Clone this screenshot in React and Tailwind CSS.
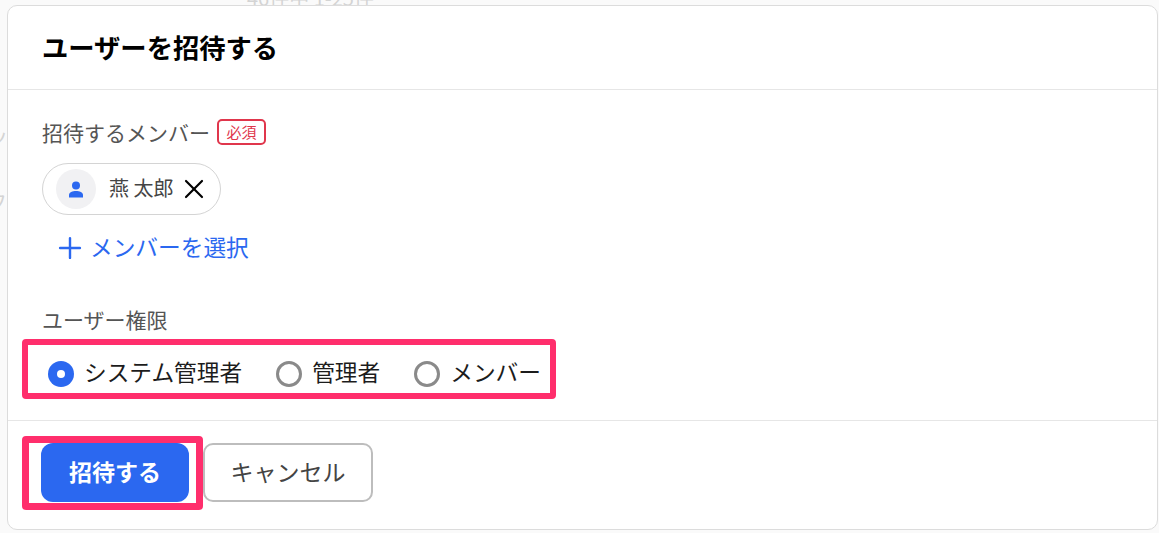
import { Plus, X } from 'lucide-react';

const font = { fontFamily: '"Noto Sans CJK JP", "Noto Sans", sans-serif' };

const Radio = ({ checked, label }) => (
  <label className="flex items-center gap-[10px]">
    {checked ? (
      <span className="flex items-center justify-center w-[26px] h-[26px] rounded-full bg-[#2b68f0]">
        <span className="w-[8px] h-[8px] rounded-full bg-white" />
      </span>
    ) : (
      <span className="w-[26px] h-[26px] rounded-full border-[3.5px] border-[#8a8a8a] bg-white" />
    )}
    <span className="mb-[5px] text-[22.7px] leading-[30px] text-[#1c1c1c]">{label}</span>
  </label>
);

export default function App() {
  return (
    <div className="relative w-[1159px] h-[533px] overflow-hidden bg-[#fafafa] pl-[7px] pt-[5px]" style={font}>
      {/* 背面の件数 */}
      <span className="absolute left-[247px] top-[-14px] text-[20px] leading-[24px] text-[#d4d4d4]">46件中 1-25件</span>
      <span className="absolute left-[-12px] top-[124px] text-[20px] leading-[24px] text-[#d4d4d4]">ッ</span>
      <span className="absolute left-[-13px] top-[190px] text-[20px] leading-[24px] text-[#d4d4d4]">フ</span>

      <div className="relative flex flex-col w-[1151px] h-[525px] bg-white border-[1.5px] border-[#dcdcdc] rounded-[10px]">
        {/* ヘッダー */}
        <div className="flex items-center h-[84px] pl-[34px] border-b border-[#e6e6e6]">
          <h1 className="mb-[2px] text-[26.3px] font-bold leading-[32px] text-black">ユーザーを招待する</h1>
        </div>

        {/* 本文 */}
        <div className="flex flex-col h-[331px] pl-[34px] border-b border-[#e6e6e6]">
          <div className="flex items-center gap-[7px] mt-[28px] h-[28px]">
            <span className="text-[21px] leading-[28px] text-[#555555]">招待するメンバー</span>
            <span className="flex items-center justify-center w-[49px] h-[26px] border-2 border-[#e0364c] rounded-[5px] text-[15px] leading-[20px] text-[#e0364c]">必須</span>
          </div>

          <div className="flex items-center w-[179px] h-[52px] mt-[17px] pl-[13px] border-[1.5px] border-[#d4d4d4] rounded-full">
            <span className="flex items-center justify-center w-[40px] h-[40px] rounded-full bg-[#f1f1f3]">
              <svg width="16" height="17" viewBox="0 0 16 17" fill="#2b68f0">
                <circle cx="8" cy="4.500" r="4" />
                <path d="M1 16.500v-2.500c0-2.600 3.500-4 7-4s7 1.400 7 4v2.500z" />
              </svg>
            </span>
            <span className="mb-[2px] ml-[13px] text-[20px] leading-[24px] text-[#444444]">燕 太郎</span>
            <X size={32} strokeWidth={1.6} className="ml-[5px] text-black" />
          </div>

          <div className="flex items-center mt-[16px] ml-[11px] h-[34px] text-[#2b68f0]">
            <Plus size={34} strokeWidth={1.7} />
            <span className="mb-[2px] ml-[3px] text-[22.7px] leading-[30px]">メンバーを選択</span>
          </div>

          <span className="mt-[40px] text-[21px] leading-[28px] text-[#555555]">ユーザー権限</span>

          {/* ハイライト枠 */}
          <div className="flex items-center gap-[34px] w-[534px] h-[60px] -ml-[20px] mt-[6px] pl-[20px] pt-[10px] border-[6px] border-[#ff2e6c] rounded-[4px]">
            <Radio checked label="システム管理者" />
            <Radio label="管理者" />
            <Radio label="メンバー" />
          </div>
        </div>

        {/* フッター */}
        <div className="flex items-center pl-[14px] pt-[15px]">
          <div className="flex items-center justify-end w-[181px] h-[74px] pr-[7px] border-[7px] border-[#ff2e6c] rounded-[4px]">
            <button className="w-[148px] h-[59px] mb-[2px] pb-[2px] rounded-[12px] bg-[#2b68f0] text-[23px] font-bold text-white">招待する</button>
          </div>
          <button className="w-[170px] h-[59px] mb-[2px] pb-[2px] border-2 border-[#bdbdbd] rounded-[10px] bg-white text-[23px] text-[#444444]">キャンセル</button>
        </div>
      </div>
    </div>
  );
}
